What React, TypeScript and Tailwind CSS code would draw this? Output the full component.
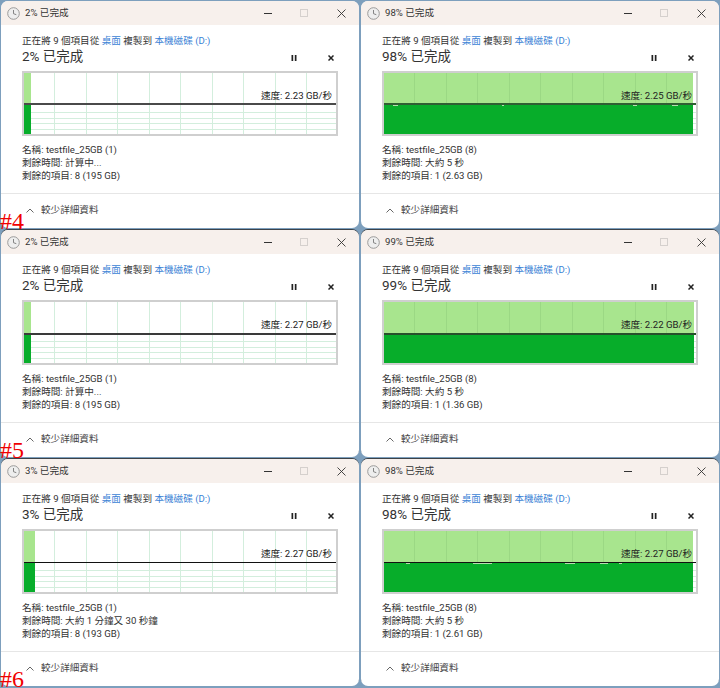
const FONT = "font-['Roboto','Noto_Sans_CJK_TC',sans-serif]";

interface CopyWindow {
  percent: string;
  speed: string;
  name: string;
  remaining: string;
  items: string;
  fillWidth: number;
  lineY: number;
  lineSize: number;
  lineColor: string;
  ticks: number[][];
}

const WINDOWS: CopyWindow[] = [
  { percent: '2%', speed: '2.23', name: 'testfile_25GB (1)', remaining: '計算中...', items: '8 (195 GB)', fillWidth: 7, lineY: 30, lineSize: 2, lineColor: '#4a4a4a', ticks: [] },
  { percent: '98%', speed: '2.25', name: 'testfile_25GB (8)', remaining: '大約 5 秒', items: '1 (2.63 GB)', fillWidth: 309, lineY: 30, lineSize: 2, lineColor: '#2f5f33', ticks: [[9, 5], [118, 2], [249, 4], [288, 6]] },
  { percent: '2%', speed: '2.27', name: 'testfile_25GB (1)', remaining: '計算中...', items: '8 (195 GB)', fillWidth: 7, lineY: 31, lineSize: 2, lineColor: '#3a3a3a', ticks: [] },
  { percent: '99%', speed: '2.22', name: 'testfile_25GB (8)', remaining: '大約 5 秒', items: '1 (1.36 GB)', fillWidth: 310, lineY: 31, lineSize: 2, lineColor: '#27502b', ticks: [] },
  { percent: '3%', speed: '2.27', name: 'testfile_25GB (1)', remaining: '大約 1 分鐘又 30 秒鐘', items: '8 (193 GB)', fillWidth: 11, lineY: 31, lineSize: 1, lineColor: '#111111', ticks: [] },
  { percent: '98%', speed: '2.27', name: 'testfile_25GB (8)', remaining: '大約 5 秒', items: '1 (2.61 GB)', fillWidth: 309, lineY: 31, lineSize: 1, lineColor: '#111111', ticks: [[22, 4], [89, 19], [181, 10], [216, 8], [235, 3]] },
];

const V_LINES = [30, 62, 93, 125, 156, 188, 219, 251, 282];
const H_LINES = [39, 45, 50, 56];

function Chart({ w }: { w: CopyWindow }) {
  const lineBottom = w.lineY + w.lineSize;
  return (
    <div className="relative mt-[7px] ml-[21px] w-[316px] h-[65px] border-2 border-[#cfcfcf]">
      <svg width="312" height="61" className="block">
        {V_LINES.map(x => (
          <line key={x} x1={x + 0.5} x2={x + 0.5} y1="0" y2="61" stroke="#d3eedd" />
        ))}
        {H_LINES.map(y => (
          <line key={y} x1="0" x2="312" y1={y + 0.5} y2={y + 0.5} stroke="#d3eedd" />
        ))}
        <rect x="0" y="0" width={w.fillWidth} height={w.lineY} fill="#a8e58e" />
        <rect x="0" y={w.lineY} width={w.fillWidth} height={61 - w.lineY} fill="#07ad2a" />
        {V_LINES.filter(x => x < w.fillWidth).map(x => (
          <line key={x} x1={x + 0.5} x2={x + 0.5} y1="0" y2={w.lineY} stroke="#9bd884" />
        ))}
        <rect x="0" y={w.lineY} width="312" height={w.lineSize} fill={w.lineColor} />
        {w.ticks.map(([x, width]) => (
          <rect key={x} x={x} y={lineBottom} width={width} height="1" fill="#b4dfae" />
        ))}
      </svg>
      <span className="absolute right-[4px] top-[17px] text-[9.6px] leading-[12px] text-[#222] whitespace-nowrap">
        速度: {w.speed} GB/秒
      </span>
    </div>
  );
}

function Win({ w, index }: { w: CopyWindow; index: number }) {
  return (
    <div className={`h-[227px] bg-white rounded-[7px] overflow-hidden text-[#333] ${FONT} ${index > 1 ? 'shadow-[0_-1px_0_#3c4248]' : ''}`}>
      {/* Title bar */}
      <div className="flex items-center h-[24px] bg-[#f7f0ec]">
        <svg width="13" height="13" viewBox="0 0 13 13" className="ml-[6px]">
          <circle cx="6.5" cy="6.5" r="5.8" fill="#eeeeee" stroke="#9a9a9a" />
          <path d="M6.5 3v3.7l2.8 1" fill="none" stroke="#777777" strokeWidth="0.9" />
        </svg>
        <span className="ml-[5px] text-[9.6px] leading-none">{w.percent} 已完成</span>
        <div className="ml-auto flex items-center">
          <span className="w-[8px] h-[1px] bg-[#333] mr-[28px]" />
          <span className="w-[8px] h-[8px] border-[1px] border-[#d5d0cd] mr-[29px]" />
          <svg width="9" height="9" viewBox="0 0 9 9" className="mr-[13px]">
            <path d="M.5.5l8 8M8.5.5l-8 8" stroke="#333333" strokeWidth="0.9" />
          </svg>
        </div>
      </div>

      {/* Copy progress */}
      <div className="pl-[21px] pt-[10px] text-[9.6px] leading-[12px] whitespace-nowrap">
        正在將 9 個項目從 <span className="text-[#3a7fd5]">桌面</span> 複製到 <span className="text-[#3a7fd5]">本機磁碟 (D:)</span>
      </div>
      <div className="flex items-center pl-[21px] pr-[25px] h-[16px] mt-[1px] text-[13.5px] leading-[16px]">
        <span>{w.percent} 已完成</span>
        <div className="ml-auto flex items-center pt-[3px]">
          <svg width="6" height="6" viewBox="0 0 6 6" className="mr-[31px]">
            <path d="M.5 0h1.7v6H.5zM3.8 0h1.7v6H3.8z" fill="#222222" />
          </svg>
          <svg width="6" height="6" viewBox="0 0 6 6">
            <path d="M.5.5l5 5M5.5.5l-5 5" stroke="#222222" strokeWidth="1.5" />
          </svg>
        </div>
      </div>
      <Chart w={w} />

      {/* Details */}
      <div className="pl-[21px] pt-[7px] text-[9.6px] leading-[13px] whitespace-nowrap">
        <div>名稱: {w.name}</div>
        <div>剩餘時間: {w.remaining}</div>
        <div>剩餘的項目: {w.items}</div>
      </div>
      <div className="mt-[11px] border-t border-[#e6e6e6] flex items-center h-[34px] pl-[25px] text-[9.6px] text-[#444]">
        <svg width="8" height="5" viewBox="0 0 8 5" className="mr-[7px]">
          <path d="M.5 4.5L4 1l3.5 3.5" fill="none" stroke="#666666" />
        </svg>
        較少詳細資料
      </div>
    </div>
  );
}

export default function App() {
  return (
    <div className="relative w-[720px] h-[688px] bg-[#7d9fbd] overflow-hidden pt-[1px] px-[1px]">
      <div className="grid grid-cols-[358px_358px] gap-x-[2px] gap-y-[2px]">
        {WINDOWS.map((w, i) => (
          <Win key={i} w={w} index={i} />
        ))}
      </div>
      <span className="absolute left-0 top-[212px] text-[24px] leading-[18px] text-[#f00000] font-['Liberation_Serif',serif]">#4</span>
      <span className="absolute left-0 top-[441px] text-[24px] leading-[18px] text-[#f00000] font-['Liberation_Serif',serif]">#5</span>
      <span className="absolute left-0 top-[670px] text-[24px] leading-[18px] text-[#f00000] font-['Liberation_Serif',serif]">#6</span>
    </div>
  );
}
